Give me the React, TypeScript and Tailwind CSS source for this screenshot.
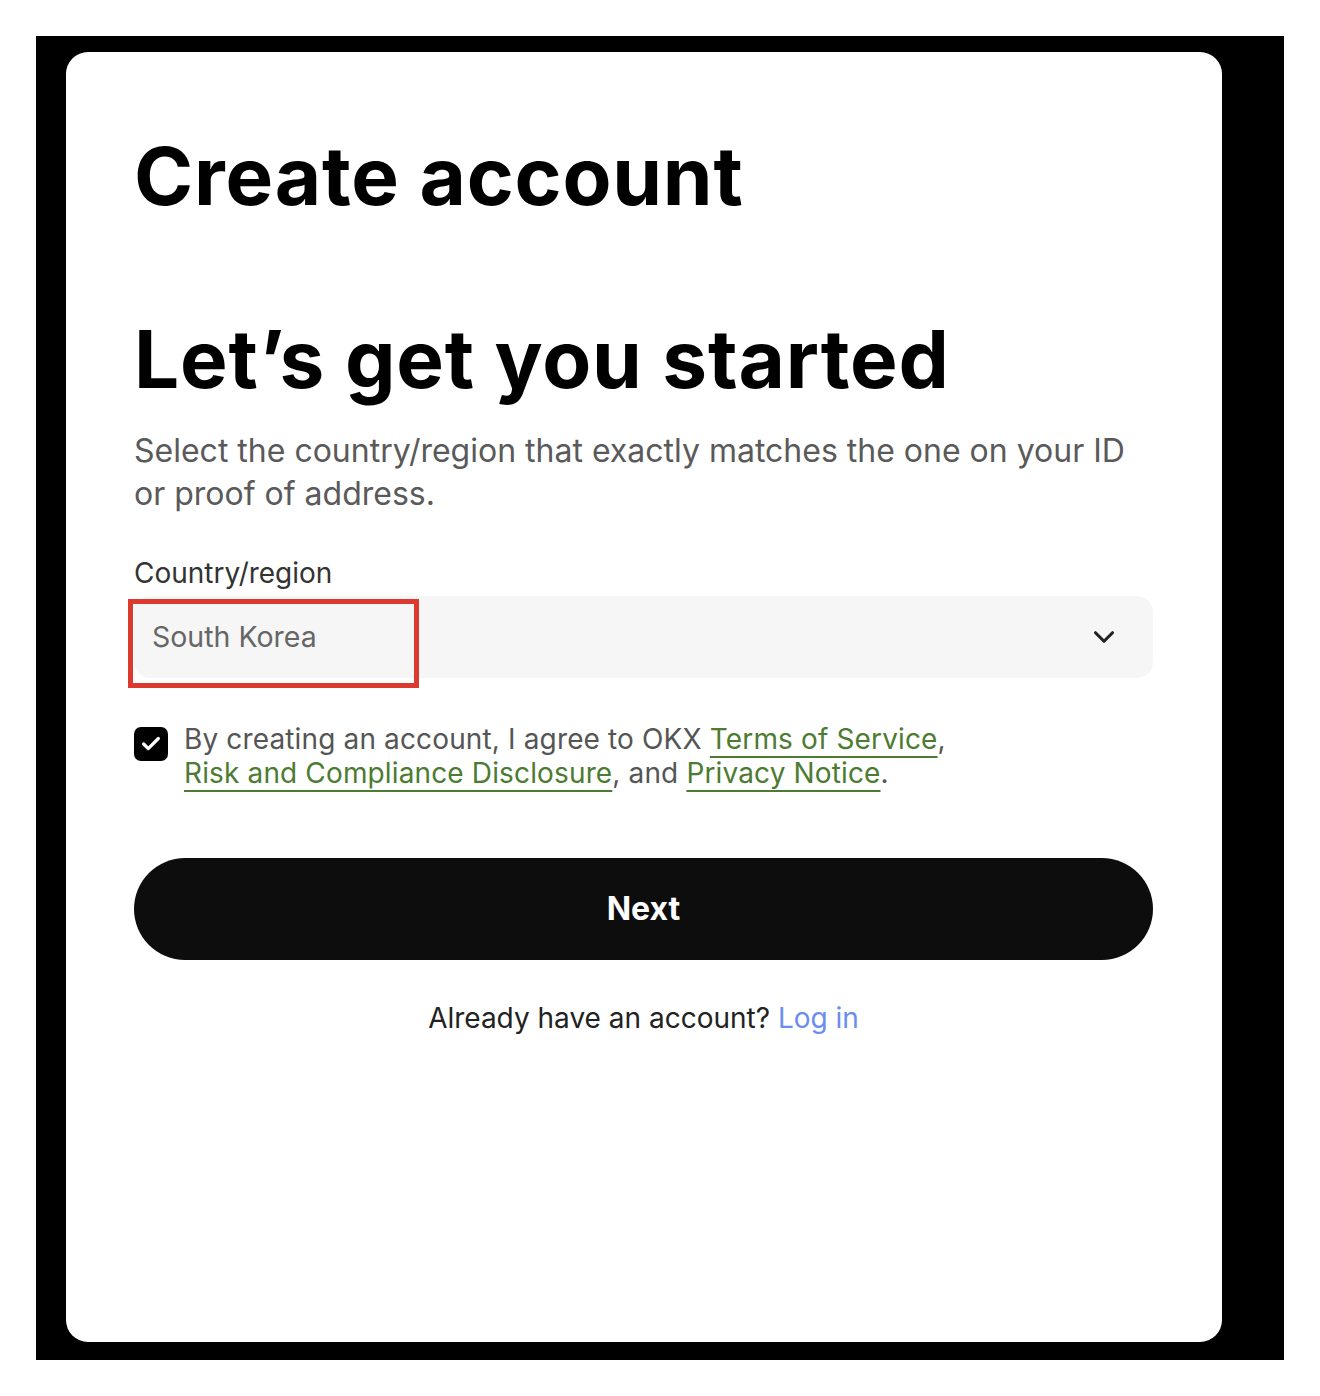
import { ChevronDown, Check } from "lucide-react";

function App() {
  return (
    <div
      className="h-[1396px] w-[1320px] bg-white pl-9 pt-9"
      style={{ fontFamily: "Inter, 'Noto Sans', sans-serif" }}
    >
      {/* Black frame */}
      <div className="h-[1324px] w-[1248px] bg-black pb-[18px] pl-[30px] pr-[62px] pt-4">
        {/* Card */}
        <div className="h-full w-full rounded-[22px] bg-white pl-[68px] pr-[69px] pt-[84px]">
          <h1 className="text-[80px] font-bold leading-[80px] tracking-[0.01em] text-black">
            Create account
          </h1>

          <h2 className="mt-[103px] text-[80px] font-bold leading-[80px] tracking-[0.01em] text-black">
            Let’s get you started
          </h2>

          <p className="mt-[30px] text-[32px] leading-[43px] text-[#5a5a5a]">
            Select the country/region that exactly matches the one on your ID
            or proof of address.
          </p>

          {/* Country select */}
          <div className="mt-[41px]">
            <div className="text-[28px] leading-[34px] text-[#333]">
              Country/region
            </div>
            <div className="relative mt-[6px]">
              <div className="flex h-[82px] items-center justify-between rounded-[16px] bg-[#f6f6f6] pl-[18px] pr-[32px]">
                <span className="text-[28.5px] text-[#666]">South Korea</span>
                <ChevronDown size={34} strokeWidth={2.2} className="text-[#222]" />
              </div>
              <div className="absolute left-[-6px] top-[3px] h-[89px] w-[291px] border-[5px] border-[#dc3a2f]" />
            </div>
          </div>

          {/* Agreement */}
          <div className="mt-[44px] flex gap-[16px]">
            <div className="mt-[5px] flex h-[34px] w-[34px] shrink-0 items-center justify-center rounded-[7px] bg-black">
              <Check size={22} strokeWidth={3.5} className="text-white" />
            </div>
            <p className="text-[28px] leading-[34px] tracking-[0.005em] text-[#555]">
              By creating an account, I agree to OKX{" "}
              <a className="text-[#4c7b31] underline decoration-[#4c7b31] decoration-2 underline-offset-[7px]">
                Terms of Service
              </a>
              ,
              <br />
              <a className="text-[#4c7b31] underline decoration-[#4c7b31] decoration-2 underline-offset-[7px]">
                Risk and Compliance Disclosure
              </a>
              , and{" "}
              <a className="text-[#4c7b31] underline decoration-[#4c7b31] decoration-2 underline-offset-[7px]">
                Privacy Notice
              </a>
              .
            </p>
          </div>

          <button className="mt-[68px] flex h-[102px] w-full items-center justify-center rounded-full bg-[#0d0d0d] text-[32px] font-bold text-white">
            Next
          </button>

          <div className="mt-[41px] text-center text-[28px] leading-[34px] text-[#222]">
            Already have an account?{" "}
            <a className="text-[#6b8df0]">Log in</a>
          </div>
        </div>
      </div>
    </div>
  );
}

export default App;
